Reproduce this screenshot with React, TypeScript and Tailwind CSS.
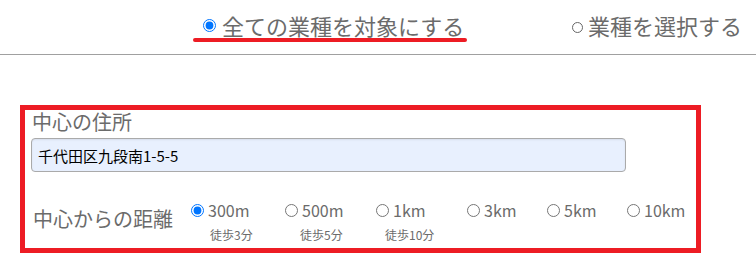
import React from "react";

const items = [
  { label: "300m", sub: "徒歩3分", w: "w-[94px]", subPl: "pl-[19px]", checked: true },
  { label: "500m", sub: "徒歩5分", w: "w-[91px]", subPl: "pl-[15px]", checked: false },
  { label: "1km", sub: "徒歩10分", w: "w-[91px]", subPl: "pl-[9px]", checked: false },
  { label: "3km", sub: "", w: "w-[80px]", subPl: "", checked: false },
  { label: "5km", sub: "", w: "w-[80px]", subPl: "", checked: false },
  { label: "10km", sub: "", w: "w-[60px]", subPl: "", checked: false },
];

export default function App() {
  return (
    <div className="w-[756px] h-[261px] bg-white overflow-hidden text-[#6b6b6b] font-['Noto_Sans_CJK_JP','Noto_Sans',sans-serif]">
      {/* header */}
      <div className="h-[55px] border-b border-[#a0a0a0] flex items-start pt-[13px]">
        <div className="ml-[193px] w-[274px] shrink-0 flex flex-col">
          <div className="flex items-center pl-[10px] h-[25px]">
            <input
              type="radio"
              name="scope"
              defaultChecked
              className="m-0 w-[13px] h-[13px] accent-[#0075ff]"
            />
            <span className="ml-[6px] text-[22px] leading-[25px] whitespace-nowrap">全ての業種を対象にする</span>
          </div>
          <div className="h-[4px] rounded-full bg-[#ed1c24]" />
        </div>
        <div className="ml-[105px] shrink-0 flex items-center h-[25px]">
          <span className="w-[11px] h-[11px] rounded-full border border-[#666] mt-[3px]" />
          <span className="ml-[5px] text-[22px] leading-[25px] whitespace-nowrap">業種を選択する</span>
        </div>
      </div>

      {/* box */}
      <div className="mt-[50px] ml-[20px] w-[681px] h-[148px] border-[5px] border-[#ed1c24]">
        <div className="pl-[7px] text-[20px] leading-[24px]">中心の住所</div>
        <div className="mt-[4px] ml-[6px]">
          <input
            readOnly
            defaultValue="千代田区九段南1-5-5"
            className="w-[595px] h-[34px] rounded-[4px] border border-[#aaa] bg-[#e8f0fe] pl-[6px] text-[15px] text-black shadow-[inset_0_1px_2px_rgba(0,0,0,0.08)] outline-none font-['Noto_Sans_CJK_JP',sans-serif]"
          />
        </div>
        <div className="flex items-start mt-[28px]">
          <div className="w-[166px] shrink-0 pl-[8px] mt-[7px] text-[20px] leading-[24px] whitespace-nowrap">中心からの距離</div>
          <div className="flex items-start">
            {items.map((it) => (
              <div key={it.label} className={`${it.w} shrink-0 flex flex-col`}>
                <label className="flex items-center h-[20px]">
                  <input
                    type="radio"
                    name="dist"
                    defaultChecked={it.checked}
                    className="m-0 w-[13px] h-[13px] accent-[#0075ff]"
                  />
                  <span className="ml-[4px] text-[16px] leading-[20px] whitespace-nowrap">{it.label}</span>
                </label>
                {it.sub && (
                  <div className={`${it.subPl} mt-[7px] text-[12px] leading-[16px] whitespace-nowrap`}>{it.sub}</div>
                )}
              </div>
            ))}
          </div>
        </div>
      </div>
    </div>
  );
}
